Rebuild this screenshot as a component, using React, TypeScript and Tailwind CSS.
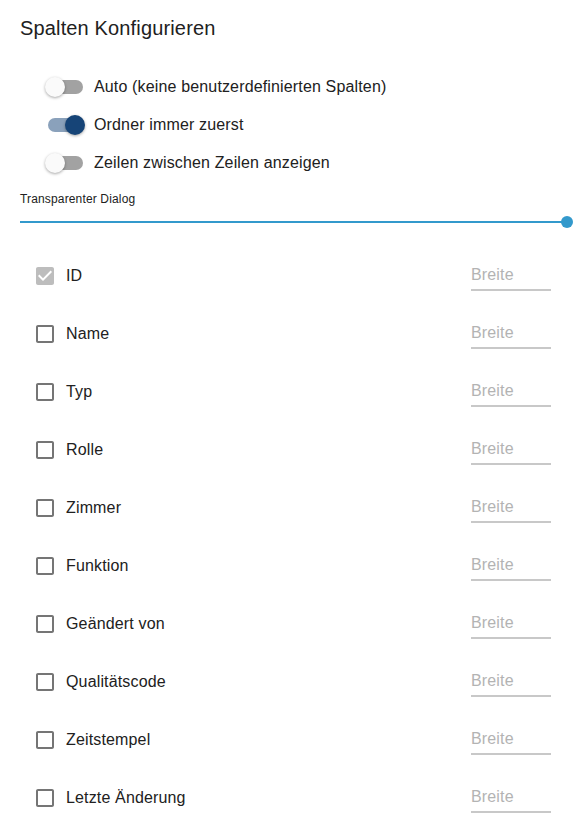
const toggles = [
  { label: "Auto (keine benutzerdefinierten Spalten)", on: false },
  { label: "Ordner immer zuerst", on: true },
  { label: "Zeilen zwischen Zeilen anzeigen", on: false },
];

const columns = [
  { name: "ID", checked: true },
  { name: "Name", checked: false },
  { name: "Typ", checked: false },
  { name: "Rolle", checked: false },
  { name: "Zimmer", checked: false },
  { name: "Funktion", checked: false },
  { name: "Geändert von", checked: false },
  { name: "Qualitätscode", checked: false },
  { name: "Zeitstempel", checked: false },
  { name: "Letzte Änderung", checked: false },
];

const Toggle = ({ on }: { on: boolean }) => (
  <div className="relative h-5 w-[40px] shrink-0">
    <div
      className={`absolute top-[3px] h-[14px] w-[36px] rounded-full ${
        on ? "left-[3px] bg-[#8aa1bb]" : "left-[2px] bg-[#a2a2a2]"
      }`}
    ></div>
    <div
      className={`absolute top-0 h-5 w-5 rounded-full shadow-[0_1px_3px_rgba(0,0,0,0.35)] ${
        on ? "left-[20px] bg-[#164477]" : "left-0 bg-[#fafafa]"
      }`}
    ></div>
  </div>
);

const CheckIcon = ({ checked }: { checked: boolean }) =>
  checked ? (
    <svg viewBox="0 0 24 24" className="h-6 w-6 shrink-0" fill="#bdbdbd">
      <path d="M19 3H5c-1.11 0-2 .9-2 2v14c0 1.1.89 2 2 2h14c1.11 0 2-.9 2-2V5c0-1.1-.89-2-2-2zm-9 14l-5-5 1.41-1.41L10 14.17l7.59-7.59L19 8l-9 9z" />
    </svg>
  ) : (
    <svg viewBox="0 0 24 24" className="h-6 w-6 shrink-0" fill="#757575">
      <path d="M19 5v14H5V5h14m0-2H5c-1.1 0-2 .9-2 2v14c0 1.1.9 2 2 2h14c1.1 0 2-.9 2-2V5c0-1.1-.9-2-2-2z" />
    </svg>
  );

export default function App() {
  return (
    <div className="h-[816px] w-[585px] overflow-hidden bg-white px-5 font-['Liberation_Sans',Arial,sans-serif] tracking-[0.15px] text-[#212121]">
      <h2 className="pt-3 text-[20px] leading-8 font-normal">Spalten Konfigurieren</h2>

      <div className="mt-[24px]">
        {toggles.map((t) => (
          <div key={t.label} className="flex h-[38px] items-center pl-[25px]">
            <Toggle on={t.on} />
            <span className="ml-[9px] text-[16px]">{t.label}</span>
          </div>
        ))}
      </div>

      <div className="mt-[10px] text-[12px] leading-[14px]">Transparenter Dialog</div>
      <div className="relative mt-[10px] h-3 w-[547px]">
        <div className="absolute top-[5px] left-0 h-[2px] w-full bg-[#3399cc]"></div>
        <div className="absolute top-0 right-[-6px] h-3 w-3 rounded-full bg-[#3399cc]"></div>
      </div>

      <div className="mt-[19px]">
        {columns.map((c) => (
          <div key={c.name} className="flex h-[58px] items-center">
            <div className="ml-[13px]">
              <CheckIcon checked={c.checked} />
            </div>
            <span className="ml-[9px] flex-1 text-[16px]">{c.name}</span>
            <div className="mr-[14px] flex w-[80px] flex-col pt-[4px]">
              <span className="text-[16px] leading-[19px] text-[#b3b3b3]">Breite</span>
              <div className="mt-[5px] h-[2px] bg-[#c8c8c8]"></div>
            </div>
          </div>
        ))}
      </div>
    </div>
  );
}
